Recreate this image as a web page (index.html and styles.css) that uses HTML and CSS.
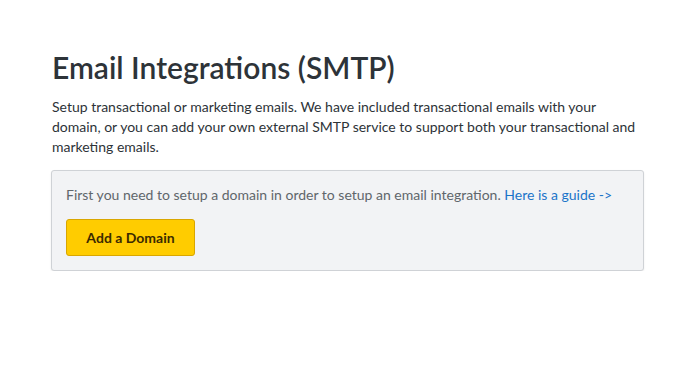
FILE: index.html
```html
<!DOCTYPE html>
<html lang="en">
<head>
  <meta charset="UTF-8" />
  <meta name="viewport" content="width=device-width, initial-scale=1.0" />
  <title>Email Integrations</title>
  <link rel="stylesheet" href="styles.css">
</head>
<body>
  <div class="page">
    <h1>Email Integrations (SMTP)</h1>
    <p class="intro">Setup transactional or marketing emails. We have included transactional emails with your domain, or you can add your own external SMTP service to support both your transactional and marketing emails.</p>

    <!-- Domain required notice -->
    <div class="notice">
      <p>First you need to setup a domain in order to setup an email integration. <a href="#">Here is a guide -&gt;</a></p>
      <button class="button">Add a Domain</button>
    </div>
  </div>
</body>
</html>
```

FILE: styles.css
```css
body {
  margin: 0;
  font-family: Lato, "Open Sans", sans-serif;
  background-color: #fff;
  color: #2d3338;
}
.page {
  width: 593px;
  padding: 50px 0 0 51px;
}
h1 {
  margin: 0 0 13px 1px;
  font-size: 30px;
  font-weight: 600;
  line-height: 34px;
  color: #2d3338;
}
.intro {
  margin: 0 0 13px 1px;
  font-size: 14px;
  line-height: 20px;
}
.notice {
  padding: 14px;
  background-color: #f2f3f5;
  border: 1px solid #cfd2d6;
  border-radius: 3px;
  box-shadow: 0 1px 2px rgba(0,0,0,0.08);
}
.notice p {
  margin: 0 0 14px;
  font-size: 14px;
  line-height: 20px;
  color: #60666b;
}
.notice a {
  color: #1a73c9;
  text-decoration: none;
}
.button {
  width: 129px;
  height: 37px;
  font-family: inherit;
  font-size: 14px;
  font-weight: 700;
  color: #3b2a00;
  background-color: #ffcc00;
  border: 1px solid #d9a600;
  border-radius: 3px;
  cursor: pointer;
}
```
